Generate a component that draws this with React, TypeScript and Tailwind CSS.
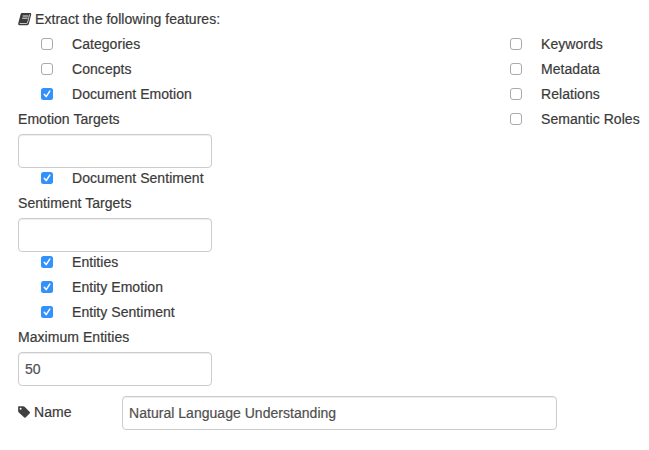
import React from "react";

const inputClass =
  "block h-[34px] rounded-[4px] border border-[#ccc] bg-white px-[6px] text-[14px] tracking-[0.03px] text-[#505050] shadow-[inset_0_1px_1px_rgba(0,0,0,0.075)] outline-none";

function BookIcon() {
  return (
    <svg className="mr-[3px] size-[14px] shrink-0" viewBox="0 0 14 14" aria-hidden="true">
      <path
        d="M4.300 1h7.900c.8 0 1.200.6 1 1.400l-2.300 9.400c-.2.900-.8 1.400-1.700 1.400H1.500C.5 13.200 0 12.500.2 11.600L2.600 2.300C2.800 1.500 3.400 1 4.300 1Z"
        fill="#3c3c3c"
      />
      <path d="M4.800 4h5.400M4.200 6.200h5.400" fill="none" stroke="#fff" strokeWidth=".9" />
      <path d="M1.700 11.500h7c.4 0 .7-.2.800-.6l2.100-8.500" fill="none" stroke="#fff" strokeWidth=".7" />
    </svg>
  );
}

function TagIcon() {
  return (
    <svg className="mr-[2px] size-[14px] shrink-0" viewBox="0 0 14 14" fill="#404040" aria-hidden="true">
      <path
        fillRule="evenodd"
        d="M.8 1.200h4.500c.5 0 .9.200 1.300.500l5.200 5.200c.4.400.4.900 0 1.300l-4.200 4.300c-.4.400-.9.400-1.300 0L.8 7.400C.4 7 .1 6.500.1 5.900V1.900c0-.4.300-.7.700-.7ZM2.600 2.700a1 1 0 1 0 0 2 1 1 0 0 0 0-2Z"
      />
    </svg>
  );
}

function Option({ label, checked = false }: { label: string; checked?: boolean }) {
  return (
    <label className="mb-[5px] flex h-5 items-center pl-[23px]">
      <span
        role="checkbox"
        aria-checked={checked}
        className={
          checked
            ? "mr-[19px] flex size-3 shrink-0 items-center justify-center rounded-[2.5px] bg-[#3291fb]"
            : "mr-[19px] size-3 shrink-0 rounded-[3px] border border-[#aaa] bg-white"
        }
      >
        {checked && (
          <svg className="size-3" viewBox="0 0 12 12" fill="none" stroke="#fff" strokeWidth="1.5" strokeLinecap="round" strokeLinejoin="round">
            <path d="M3.3 6.3 5.2 8.6 8.8 3.1" />
          </svg>
        )}
      </span>
      <span>{label}</span>
    </label>
  );
}

function Field({ label, value }: { label: string; value: string }) {
  return (
    <div>
      <div className="mb-[5px] h-5">{label}</div>
      <input className={`${inputClass} w-[194px]`} defaultValue={value} aria-label={label} />
    </div>
  );
}

export default function App() {
  return (
    <main className="h-[450px] w-[649px] overflow-hidden whitespace-nowrap bg-white pl-[18px] pt-[9px] font-['Liberation_Sans',Arial,sans-serif] text-[14px] leading-5 tracking-[0.05px] text-[#3a3a3a] [-webkit-text-stroke:0.2px]">
      <div className="mb-[5px] flex h-5 items-center">
        <BookIcon />
        <span>Extract the following features:</span>
      </div>
      <div className="flex">
        <div className="w-[469px]">
          <Option label="Categories" />
          <Option label="Concepts" />
          <Option label="Document Emotion" checked />
          <Field label="Emotion Targets" value="" />
          <Option label="Document Sentiment" checked />
          <Field label="Sentiment Targets" value="" />
          <Option label="Entities" checked />
          <Option label="Entity Emotion" checked />
          <Option label="Entity Sentiment" checked />
          <Field label="Maximum Entities" value="50" />
        </div>
        <div>
          <Option label="Keywords" />
          <Option label="Metadata" />
          <Option label="Relations" />
          <Option label="Semantic Roles" />
        </div>
      </div>
      <div className="mt-[10px] flex">
        <div className="mt-[6px] flex h-5 w-[104px] items-center">
          <TagIcon />
          <span>Name</span>
        </div>
        <input className={`${inputClass} w-[435px]`} defaultValue="Natural Language Understanding" aria-label="Name" />
      </div>
    </main>
  );
}
